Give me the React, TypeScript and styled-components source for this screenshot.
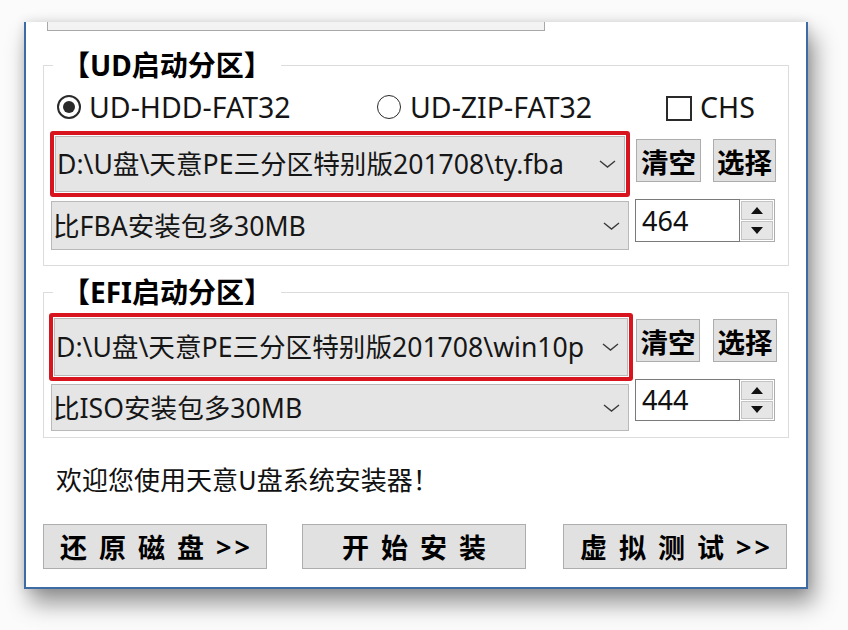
import React from "react";
import styled, { createGlobalStyle } from "styled-components";

const FONT = `"Noto Sans", "Noto Sans CJK SC", sans-serif`;
const CJK = `"Noto Sans CJK SC", "Noto Sans", sans-serif`;

const GlobalStyle = createGlobalStyle`
  html, body { margin: 0; padding: 0; background: #fbfbfb; }
  body { font-family: ${FONT}; color: #111; }
  * { box-sizing: border-box; }
`;

const Page = styled.div`
  width: 848px;
  height: 630px;
  padding: 22px 0 0 24px;
  overflow: hidden;
`;

const Window = styled.div`
  width: 784px;
  height: 567px;
  background: #fff;
  border: 2px solid #3d6ca4;
  border-top: none;
  box-shadow: 6px 14px 22px rgba(0, 0, 0, 0.42), 0 0 10px rgba(0, 0, 0, 0.12);
  display: flex;
  flex-direction: column;
`;

const TopStub = styled.div`
  margin-left: 21px;
  width: 498px;
  height: 9px;
  background: #f3f3f3;
  border: 1px solid #a8a8a8;
  border-top: none;
`;

const Group = styled.fieldset<{ $top: number }>`
  margin: ${(p) => p.$top}px 0 0 17px;
  padding: 0;
  width: 746px;
  border: 1px solid #dcdcdc;
  min-inline-size: auto;
`;

const Legend = styled.legend`
  margin-left: 9px;
  padding: 0 9px 0 9px;
  font: 700 28px/26px ${FONT};
  color: #000;
`;

const Content = styled.div<{ $pb: number }>`
  display: flex;
  flex-direction: column;
  padding-bottom: ${(p) => p.$pb}px;
`;

const RadioRow = styled.div`
  display: flex;
  align-items: center;
  height: 28px;
  margin-top: 15px;
  padding-left: 13px;
`;

const Option = styled.label<{ $w?: number; $gap: number }>`
  display: flex;
  align-items: center;
  width: ${(p) => (p.$w ? `${p.$w}px` : "auto")};
  gap: ${(p) => p.$gap}px;
  font: 400 28.5px/28px ${FONT};
  color: #151515;
  white-space: nowrap;
`;

const RadioDot = styled.span<{ $on?: boolean }>`
  width: 24px;
  height: 24px;
  border-radius: 50%;
  border: ${(p) => (p.$on ? "2px" : "1.6px")} solid #2a2a2a;
  display: flex;
  align-items: center;
  justify-content: center;
  flex: none;
  &::after {
    content: "";
    width: 12px;
    height: 12px;
    border-radius: 50%;
    background: ${(p) => (p.$on ? "#2a2a2a" : "transparent")};
  }
`;

const CheckBox = styled.span`
  width: 26px;
  height: 25px;
  border: 2px solid #2a2a2a;
  flex: none;
  margin-top: 2px;
`;

const Row = styled.div<{ $mt: number }>`
  display: flex;
  align-items: flex-start;
  margin-top: ${(p) => p.$mt}px;
`;

const RedBox = styled.div<{ $ml: number; $w: number; $h: number }>`
  margin-left: ${(p) => p.$ml}px;
  width: ${(p) => p.$w}px;
  height: ${(p) => p.$h}px;
  border: 4px solid #d8141e;
  border-radius: 3px;
  padding: 1px 1px;
  display: flex;
`;

const Combo = styled.div<{ $ml?: number; $mt?: number; $w?: number; $h?: number }>`
  margin-left: ${(p) => p.$ml ?? 0}px;
  margin-top: ${(p) => p.$mt ?? 0}px;
  width: ${(p) => (p.$w ? `${p.$w}px` : "100%")};
  height: ${(p) => (p.$h ? `${p.$h}px` : "100%")};
  background: #e5e5e5;
  border: 1px solid #b9b9b9;
  display: flex;
  align-items: center;
  justify-content: space-between;
  padding: 0 8px 0 1px;
  font: 400 26.6px/30px ${FONT};
  color: #161616;
  white-space: nowrap;
`;

const ComboText = styled.span`
  min-width: 0;
`;

const SmallButton = styled.button<{ $ml: number; $mt: number; $w: number }>`
  margin-left: ${(p) => p.$ml}px;
  margin-top: ${(p) => p.$mt}px;
  width: ${(p) => p.$w}px;
  height: 43px;
  padding: 0;
  background: #e1e1e1;
  border: 1px solid #adadad;
  font: 700 27.5px/30px ${CJK};
  color: #000;
  display: flex;
  align-items: center;
  justify-content: center;
`;

const Spin = styled.div<{ $h: number }>`
  margin-left: 6px;
  height: ${(p) => p.$h}px;
  display: flex;
`;

const SpinText = styled.div`
  width: 105px;
  height: 100%;
  border: 1px solid #7a7a7a;
  background: #fff;
  padding-left: 6px;
  display: flex;
  align-items: center;
  font: 400 27px/30px ${FONT};
  color: #111;
`;

const SpinButtons = styled.div`
  width: 35px;
  height: 100%;
  display: flex;
  flex-direction: column;
  border: 1px solid #adadad;
  border-left: none;
  background: #fff;
  padding: 1px;
  gap: 1px;
`;

const SpinBtn = styled.div`
  flex: 1;
  background: #e6e6e6;
  border: 1px solid #c4c4c4;
  display: flex;
  align-items: center;
  justify-content: center;
`;

const Welcome = styled.div`
  margin: 26px 0 0 30px;
  font: 400 26px/30px ${CJK};
  color: #111;
`;

const ButtonBar = styled.div`
  margin: 30px 0 0 17px;
  display: flex;
`;

const BigButton = styled.button<{ $ml: number }>`
  margin-left: ${(p) => p.$ml}px;
  width: 224px;
  height: 45px;
  padding: 0;
  background: #e1e1e1;
  border: 1px solid #adadad;
  display: flex;
  align-items: center;
  justify-content: center;
  font: 700 27px/30px ${CJK};
  color: #000;
`;

const Spaced = styled.span`
  letter-spacing: 12px;
`;

const SpacedLast = styled.span`
  letter-spacing: 12px;
  margin-right: -12px;
`;

const Arrows = styled.span`
  letter-spacing: 3px;
  font-family: ${FONT};
  margin-right: -3px;
`;

const Chevron = () => (
  <svg width="17" height="8" viewBox="0 0 17 8" style={{ flex: "none" }}>
    <polyline points="1,1 8.5,7 16,1" fill="none" stroke="#3a3a3a" strokeWidth="1.4" />
  </svg>
);

const Tri = ({ up }: { up?: boolean }) => (
  <svg width="12" height="7" viewBox="0 0 12 7">
    <polygon points={up ? "0,7 6,0 12,7" : "0,0 6,7 12,0"} fill="#111" />
  </svg>
);

const SpinBox = ({ value, h }: { value: string; h: number }) => (
  <Spin $h={h}>
    <SpinText>{value}</SpinText>
    <SpinButtons>
      <SpinBtn>
        <Tri up />
      </SpinBtn>
      <SpinBtn>
        <Tri />
      </SpinBtn>
    </SpinButtons>
  </Spin>
);

export default function App() {
  return (
    <>
      <GlobalStyle />
      <Page>
        <Window>
          <TopStub />
          <Group $top={21}>
            <Legend>【UD启动分区】</Legend>
            <Content $pb={15}>
              <RadioRow>
                <Option $w={320} $gap={8}>
                  <RadioDot $on />
                  UD-HDD-FAT32
                </Option>
                <Option $w={289} $gap={9}>
                  <RadioDot />
                  UD-ZIP-FAT32
                </Option>
                <Option $gap={8}>
                  <CheckBox />
                  CHS
                </Option>
              </RadioRow>
              <Row $mt={10}>
                <RedBox $ml={6} $w={580} $h={66}>
                  <Combo>
                    <ComboText>D:\U盘\天意PE三分区特别版201708\ty.fba</ComboText>
                    <Chevron />
                  </Combo>
                </RedBox>
                <SmallButton $ml={6} $mt={8} $w={65}>清空</SmallButton>
                <SmallButton $ml={12} $mt={8} $w={63}>选择</SmallButton>
              </Row>
              <Row $mt={2}>
                <Combo $ml={7} $mt={2} $w={578} $h={49}>
                  <ComboText>比FBA安装包多30MB</ComboText>
                  <Chevron />
                </Combo>
                <SpinBox value="464" h={43} />
              </Row>
            </Content>
          </Group>
          <Group $top={13}>
            <Legend>【EFI启动分区】</Legend>
            <Content $pb={6}>
              <Row $mt={8}>
                <RedBox $ml={5} $w={584} $h={68}>
                  <Combo>
                    <ComboText>D:\U盘\天意PE三分区特别版201708\win10p</ComboText>
                    <Chevron />
                  </Combo>
                </RedBox>
                <SmallButton $ml={3} $mt={6} $w={64}>清空</SmallButton>
                <SmallButton $ml={13} $mt={6} $w={64}>选择</SmallButton>
              </Row>
              <Row $mt={-2}>
                <Combo $ml={7} $mt={5} $w={578} $h={47}>
                  <ComboText>比ISO安装包多30MB</ComboText>
                  <Chevron />
                </Combo>
                <SpinBox value="444" h={42} />
              </Row>
            </Content>
          </Group>
          <Welcome>欢迎您使用天意U盘系统安装器！</Welcome>
          <ButtonBar>
            <BigButton $ml={0}>
              <Spaced>还原磁盘</Spaced>
              <Arrows>&gt;&gt;</Arrows>
            </BigButton>
            <BigButton $ml={35}>
              <SpacedLast>开始安装</SpacedLast>
            </BigButton>
            <BigButton $ml={37}>
              <Spaced>虚拟测试</Spaced>
              <Arrows>&gt;&gt;</Arrows>
            </BigButton>
          </ButtonBar>
        </Window>
      </Page>
    </>
  );
}
